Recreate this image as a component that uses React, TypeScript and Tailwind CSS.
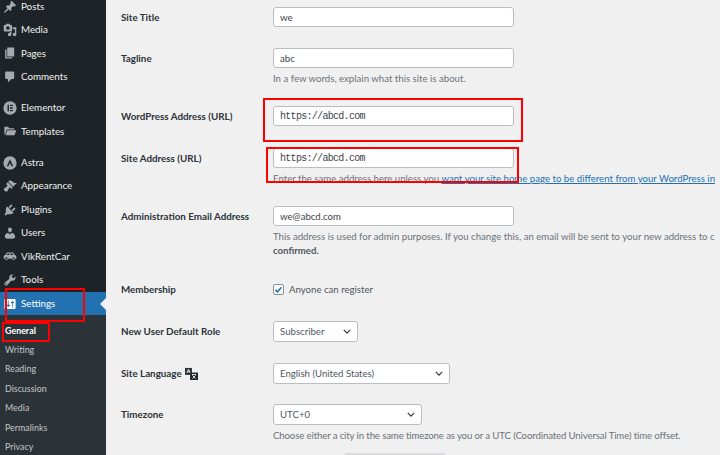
import React from "react";

const D = ({ d, className = "" }: { d: string; className?: string }) => (
  <svg viewBox="0 0 20 20" className={`w-[14px] h-[14px] fill-current ${className}`}><path d={d} /></svg>
);

const icons: Record<string, React.ReactNode> = {
  Posts: <D d="M10.44 3.02l1.82-1.82 6.36 6.35-1.83 1.82c-1.05-.68-2.48-.57-3.41.36l-.75.75c-.92.93-1.04 2.35-.35 3.41l-1.83 1.82-2.41-2.41-2.8 2.79c-.42.42-3.38 2.71-3.8 2.29s1.86-3.39 2.28-3.81l2.79-2.79L4.1 9.36l1.83-1.82c1.05.69 2.48.57 3.4-.36l.75-.75c.93-.92 1.05-2.35.36-3.41z" />,
  Media: <D d="M13 11V4c0-.55-.45-1-1-1h-1.67L9 1H5L3.67 3H2c-.55 0-1 .45-1 1v7c0 .55.45 1 1 1h10c.55 0 1-.45 1-1zM7 4.5c1.38 0 2.5 1.12 2.5 2.5S8.38 9.5 7 9.5 4.5 8.38 4.5 7 5.62 4.5 7 4.5zM14 6h5v10.5c0 1.38-1.12 2.5-2.5 2.5S14 17.88 14 16.5s1.12-2.5 2.5-2.5c.17 0 .34.02.5.05V9h-3V6zm-4 8.05V13h2v3.5c0 1.38-1.12 2.5-2.5 2.5S7 17.88 7 16.5 8.12 14 9.5 14c.17 0 .34.02.5.05z" />,
  Pages: <D d="M6 15V2h10v13H6zm-1 1h8v2H3V5h2v11z" />,
  Comments: <D d="M5 2h9c1.1 0 2 .9 2 2v7c0 1.1-.9 2-2 2h-2l-5 5v-5H5c-1.1 0-2-.9-2-2V4c0-1.1.9-2 2-2z" />,
  Elementor: (
    <svg viewBox="0 0 20 20" className="w-[14px] h-[14px]"><circle cx="10" cy="10" r="9.5" fill="currentColor" /><path d="M6.5 5.5h2v9h-2zM10 5.5h4v1.8h-4zM10 9.1h4v1.8h-4zM10 12.7h4v1.8h-4z" fill="#1d2327" /></svg>
  ),
  Templates: <D d="M2 4h5l2 2h7v2H5.5L3 15H2V4zm4.2 5H19l-2.6 7H3.6l2.6-7z" />,
  Astra: (
    <svg viewBox="0 0 20 20" className="w-[14px] h-[14px]"><circle cx="10" cy="10" r="9.5" fill="currentColor" /><path d="M10 4.5l4.6 10h-2.4L10 9.6l-2.2 4.9H5.4z" fill="#1d2327" /></svg>
  ),
  Appearance: <D d="M14.48 11.06L7.41 3.99l1.5-1.5c.5-.56 2.3-.47 3.51.32 1.21.8 1.43 1.28 2.91 2.1 1.18.64 2.45 1.26 4.45.85zm-.71.71L6.7 4.7 4.93 6.47c-.39.39-.39 1.02 0 1.41l1.06 1.06c.39.39.39 1.03 0 1.42-.6.6-1.43 1.11-2.21 1.69-.35.26-.7.53-1.01.84C1.43 13.23.4 14.85 1.8 16.25c.7.7 2.3 2 3.6 1.7 1.2-.4 1.5-1.3 2-2.6.4-1 1-2 1.7-2.7.39-.39 1.03-.39 1.42 0l1.06 1.06c.39.39 1.02.39 1.41 0z" />,
  Plugins: <D d="M13.11 4.36L9.87 7.6 8 5.73l3.24-3.24c.35-.34 1.05-.2 1.56.32.52.51.66 1.21.31 1.55zm-8 1.77l.91-1.12 9.01 9.01-1.19.84c-.71.71-2.63 1.16-3.82 1.16H6.14L4.9 17.26c-.59.59-1.54.59-2.12 0-.59-.58-.59-1.53 0-2.12l1.24-1.24v-3.88c0-1.13.4-3.19 1.09-3.89zm7.26 3.97l3.24-3.24c.34-.35 1.04-.21 1.55.31.52.51.66 1.21.31 1.55l-3.24 3.25z" />,
  Users: <D d="M10 9.25c-2.27 0-2.73-3.44-2.73-3.44C7 4.02 7.82 2 9.97 2c2.16 0 2.98 2.02 2.71 3.81 0 0-.41 3.44-2.68 3.44zm0 2.57L12.72 10c2.39 0 4.52 2.33 4.52 4.53v2.49s-3.65 1.13-7.24 1.13c-3.65 0-7.24-1.13-7.24-1.13v-2.49c0-2.25 1.94-4.48 4.47-4.48z" />,
  VikRentCar: (
    <svg viewBox="0 0 20 20" className="w-[14px] h-[14px] fill-current"><path fillRule="evenodd" d="M5.5 5h9l2.2 3.6c1.3.3 2.3 1.1 2.3 2.4v3h-1.6a2.4 2.4 0 0 1-4.6 0H7.2a2.4 2.4 0 0 1-4.6 0H1v-3c0-1.3 1-2.1 2.3-2.4zM6.6 6.5 5.2 8.5h4V6.5zM10.8 6.5v2h4l-1.4-2zM4.9 11.8a1.5 1.5 0 1 0 0 3 1.5 1.5 0 0 0 0-3zM15.1 11.8a1.5 1.5 0 1 0 0 3 1.5 1.5 0 0 0 0-3z" /></svg>
  ),
  Tools: <D d="M16.68 9.77c-1.34 1.34-3.3 1.67-4.95.99l-5.41 6.52c-.99.99-2.59.99-3.58 0s-.99-2.59 0-3.57l6.52-5.42c-.68-1.65-.35-3.61.99-4.95 1.28-1.28 3.12-1.62 4.72-1.06l-2.89 2.89 2.82 2.82 2.86-2.87c.53 1.58.18 3.39-1.08 4.65zM3.81 16.21c.4.39 1.04.39 1.43 0 .4-.4.4-1.04 0-1.43-.39-.4-1.03-.4-1.43 0-.39.39-.39 1.03 0 1.43z" />,
  Settings: <D d="M18 16V4c0-.55-.45-1-1-1H3c-.55 0-1 .45-1 1v12c0 .55.45 1 1 1h14c.55 0 1-.45 1-1zM8 11h1c.55 0 1 .45 1 1s-.45 1-1 1H8v1.5c0 .28-.22.5-.5.5s-.5-.22-.5-.5V13H6c-.55 0-1-.45-1-1s.45-1 1-1h1V5.5c0-.28.22-.5.5-.5s.5.22.5.5V11zm5-2h-1c-.55 0-1-.45-1-1s.45-1 1-1h1V5.5c0-.28.22-.5.5-.5s.5.22.5.5V7h1c.55 0 1 .45 1 1s-.45 1-1 1h-1v5.5c0 .28-.22.5-.5.5s-.5-.22-.5-.5V9z" />,
};

const MenuItem = ({ label }: { label: string }) => (
  <div className="h-[23.4px] flex items-center text-[#f0f0f1]">
    <span className="w-[21px] pl-[3px] flex justify-start text-[#a7aaad]">{icons[label]}</span>
    <span>{label}</span>
  </div>
);

const Sub = ({ label }: { label: string }) => (
  <div className="h-[19.4px] flex items-center pl-[5px] text-[#c3c6c8]">{label}</div>
);

const Sidebar = () => (
  <aside className="w-[106px] shrink-0 bg-[#1d2327] text-[9.8px] leading-none overflow-hidden">
    <div className="-mt-[5px]">
      <MenuItem label="Posts" />
      <MenuItem label="Media" />
      <MenuItem label="Pages" />
      <MenuItem label="Comments" />
      <div className="h-[7.8px]" />
      <MenuItem label="Elementor" />
      <MenuItem label="Templates" />
      <div className="h-[8px]" />
      <MenuItem label="Astra" />
      <MenuItem label="Appearance" />
      <MenuItem label="Plugins" />
      <MenuItem label="Users" />
      <MenuItem label="VikRentCar" />
      <MenuItem label="Tools" />
    </div>
    <div className="relative h-[23px] mt-[0.6px] bg-[#2271b1] text-white flex items-center">
      <span className="w-[21px] pl-[3px] text-white">{icons.Settings}</span>
      <span>Settings</span>
      <span className="absolute right-0 top-[6px] w-0 h-0 border-y-[6px] border-y-transparent border-r-[6px] border-r-[#f0f0f1]" />
    </div>
    <div className="bg-[#2c3338] pt-[6.3px] pb-[8px] text-[8.9px]">
      <div className="h-[19.4px] flex items-center pl-[5px] text-white font-bold">General</div>
      {["Writing", "Reading", "Discussion", "Media", "Permalinks", "Privacy"].map((s) => (
        <Sub key={s} label={s} />
      ))}
    </div>
  </aside>
);

const Row = ({ label, className = "", children }: { label: React.ReactNode; className?: string; children: React.ReactNode }) => (
  <div className={`flex ${className}`}>
    <div className="w-[152px] shrink-0 h-[20px] pt-[1px] flex items-center font-bold text-[9.8px] text-[#2c3338]">{label}</div>
    <div className="min-w-0 flex-1">{children}</div>
  </div>
);

const Field = ({ value, mono = false }: { value: string; mono?: boolean }) => (
  <div className={`w-[241px] h-[20px] bg-white border border-[#bcbdc0] rounded-[3px] flex items-center pl-[6px] text-[#3c434a] ${mono ? "font-['Liberation_Mono',monospace] text-[10px] tracking-[-0.7px]" : ""}`}>
    {value}
  </div>
);

const Select = ({ value, width }: { value: string; width: string }) => (
  <div className={`${width} h-[21px] bg-white border border-[#bcbdc0] rounded-[3px] flex items-center justify-between pl-[6px] pr-[6px] text-[#50575e]`}>
    <span>{value}</span>
    <svg viewBox="0 0 10 6" className="w-[8px] h-[5px] fill-none stroke-[#2c3338] stroke-[1.4]"><path d="M1 1l4 4 4-4" /></svg>
  </div>
);

const Desc = ({ children, className = "" }: { children: React.ReactNode; className?: string }) => (
  <p className={`text-[#6d7277] whitespace-nowrap leading-[14px] mt-[3px] ${className}`}>{children}</p>
);

export default function App() {
  return (
    <div className="relative w-[720px] h-[455px] overflow-hidden flex bg-[#f0f0f1] font-['Lato',sans-serif] text-[9.65px]">
      <Sidebar />
      <main className="flex-1 min-w-0 pl-[15px] pt-[7px] overflow-hidden">
        <Row label="Site Title"><Field value="we" /></Row>
        <Row label="Tagline" className="mt-[21px]">
          <Field value="abc" />
          <Desc>In a few words, explain what this site is about.</Desc>
        </Row>
        <Row label="WordPress Address (URL)" className="mt-[21px]"><Field value="https://abcd.com" mono /></Row>
        <Row label="Site Address (URL)" className="mt-[22px]">
          <Field value="https://abcd.com" mono />
          <Desc>
            Enter the same address here unless you <span className="text-[#2271b1] underline">want your site home page to be different from your WordPress in</span>
          </Desc>
        </Row>
        <Row label="Administration Email Address" className="mt-[21px]">
          <Field value="we@abcd.com" />
          <Desc>
            This address is used for admin purposes. If you change this, an email will be sent to your new address to c
            <br />
            <span className="font-bold text-[#50575e]">confirmed.</span>
          </Desc>
        </Row>
        <Row label="Membership" className="mt-[22px]">
          <label className="h-[20px] flex items-center gap-[5px] text-[#50575e]">
            <span className="w-[11px] h-[11px] bg-white border border-[#8c8f94] rounded-[2px] flex items-center justify-center">
              <svg viewBox="0 0 12 12" className="w-[9px] h-[9px] fill-none stroke-[#2271b1] stroke-[2]"><path d="M2 6.5l2.6 2.6L10 3" /></svg>
            </span>
            Anyone can register
          </label>
        </Row>
        <Row label="New User Default Role" className="mt-[22px]"><Select value="Subscriber" width="w-[85px]" /></Row>
        <Row
          label={
            <span className="flex items-center gap-[3px]">
              Site Language
              <svg viewBox="0 0 14 14" className="w-[13px] h-[13px]">
                <path fill="#2c3338" d="M0 1h7.5v7.5H0z" />
                <path fill="none" stroke="#f0f0f1" strokeWidth="1" d="M2 6.5 3.8 2.5 5.6 6.5M2.7 5h2.2" />
                <path fill="#1d2327" d="M5.5 6H14v8H5.5z" />
                <path fill="none" stroke="#f0f0f1" strokeWidth="1" d="M7.5 8h4.5M8 9l3.5 3.5M11.5 9 8 12.5" />
              </svg>
            </span>
          }
          className="mt-[21px]"
        >
          <Select value="English (United States)" width="w-[177px]" />
        </Row>
        <Row label="Timezone" className="mt-[20px]">
          <Select value="UTC+0" width="w-[149px]" />
          <Desc className="tracking-[-0.13px]">Choose either a city in the same timezone as you or a UTC (Coordinated Universal Time) time offset.</Desc>
          <div className="mt-[11px] ml-[72px] w-[100px] h-[12px] bg-[#dcdcde]" />
        </Row>
      </main>

      {/* red annotation rectangles */}
      <div className="absolute left-[263px] top-[98px] w-[260px] h-[44px] border-2 border-[#f00] pointer-events-none" />
      <div className="absolute left-[266px] top-[147px] w-[253px] h-[36px] border-2 border-[#f00] pointer-events-none" />
      <div className="absolute left-[5px] top-[288px] w-[80px] h-[34px] border-2 border-[#f00] pointer-events-none" />
      <div className="absolute left-[2px] top-[322px] w-[48px] h-[20px] border-2 border-[#f00] pointer-events-none" />
    </div>
  );
}
